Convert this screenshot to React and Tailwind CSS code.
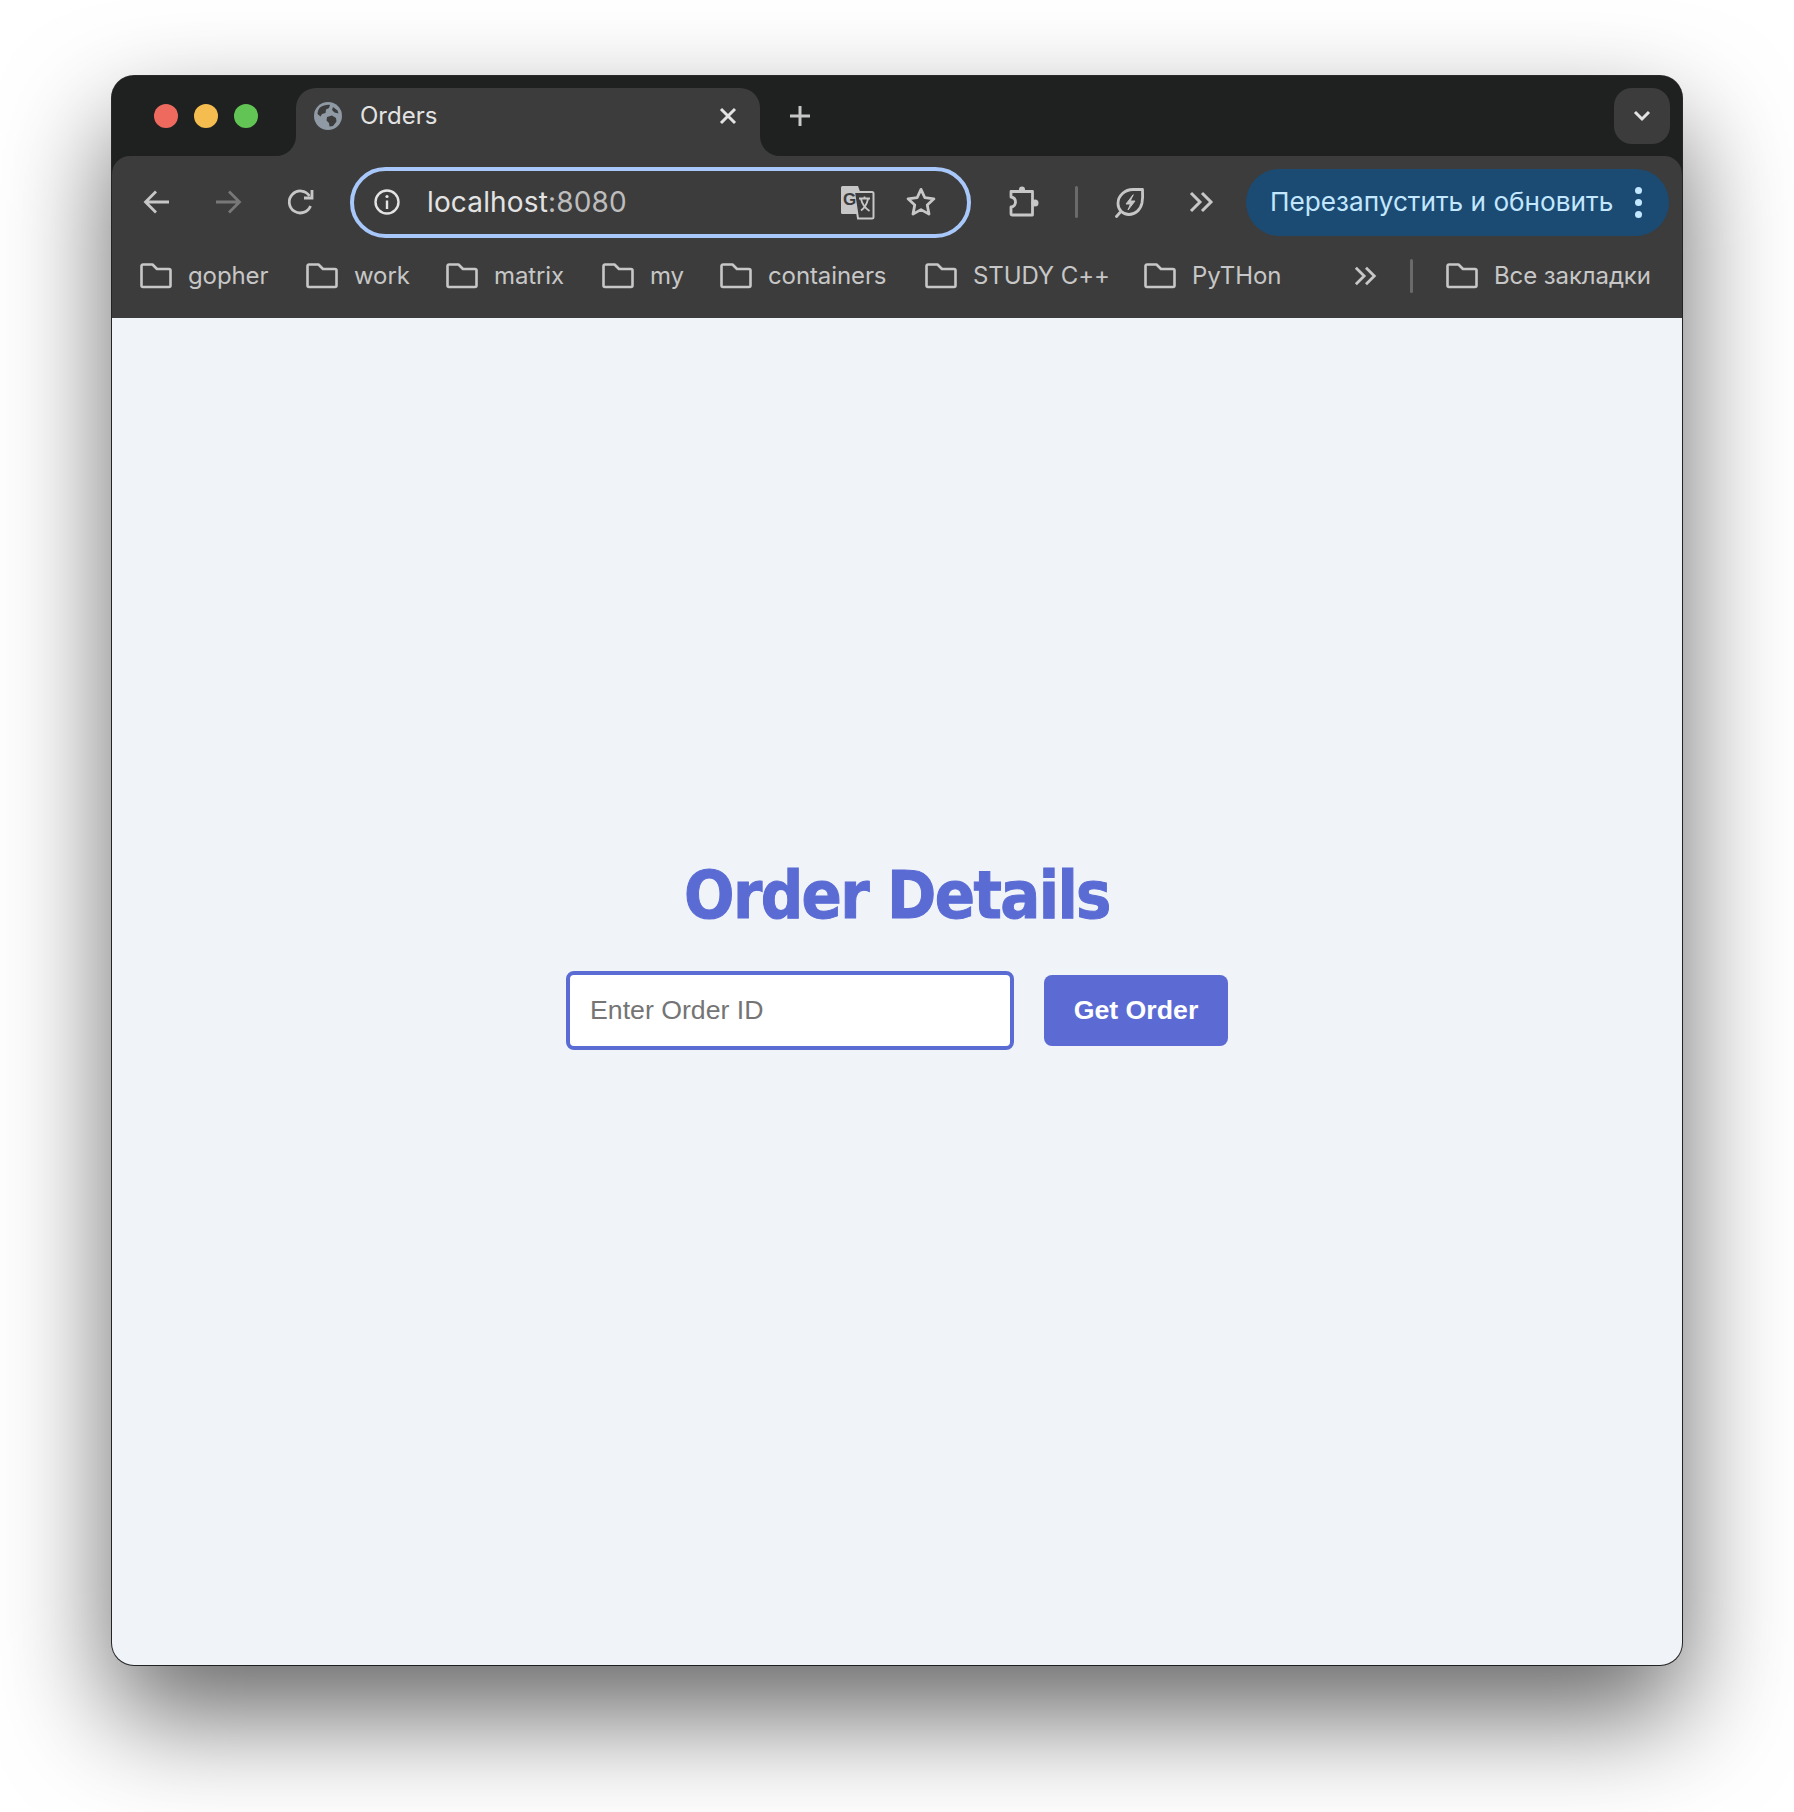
const bookmarks = [
  { label: "gopher", width: "w-[166px]" },
  { label: "work", width: "w-[140px]" },
  { label: "matrix", width: "w-[156px]" },
  { label: "my", width: "w-[118px]" },
  { label: "containers", width: "w-[205px]" },
  { label: "STUDY C++", width: "w-[219px]" },
  { label: "PyTHon", width: "w-[210px]" },
];

function Folder() {
  return (
    <svg width="32" height="26" viewBox="0 0 32 26" fill="none" stroke="#c7c7c7" strokeWidth="2.6" strokeLinejoin="round" className="shrink-0">
      <path d="M1.5 3a1.5 1.5 0 0 1 1.5-1.5h9.5l4.5 4.5h12a1.5 1.5 0 0 1 1.5 1.5v15a1.5 1.5 0 0 1-1.5 1.5H3a1.5 1.5 0 0 1-1.5-1.5z" />
    </svg>
  );
}

function Chevrons({ size = 26 }) {
  return (
    <svg width={size} height={size} viewBox="0 0 26 26" fill="none" stroke="#c7c7c7" strokeWidth="3" className="shrink-0">
      <path d="M2 4l9 9-9 9M13 4l9 9-9 9" />
    </svg>
  );
}

function Globe() {
  return (
    <svg width="28" height="28" viewBox="0 0 28 28" className="shrink-0">
      <circle cx="14" cy="14" r="14" fill="#8f9aa5" />
      <path d="M6 5.5c3-2 7-3 10-2.5l-1 3-3 1.500-.5 3.500-3.500 1-1.500 2.500L3.500 12C3.500 9.500 4.500 7 6 5.500z" fill="#3c3c3c" />
      <path d="M13 15l5-1.500 4 2.500.5 3.500-3.500 4.500-3.500.5-.5-3.500-2.500-2.500z" fill="#3c3c3c" />
      <path d="M19 5l4.500 3.500 1 3-4-1-2.500-2.500z" fill="#3c3c3c" />
    </svg>
  );
}

function Translate() {
  return (
    <svg width="36" height="36" viewBox="0 0 36 36" className="shrink-0">
      <path d="M2 3.500A1.500 1.500 0 0 1 3.500 2H19l10 28H3.500A1.500 1.500 0 0 1 2 28.500z" fill="#c7c7c7" />
      <path d="M15 8h18a1.500 1.500 0 0 1 1.500 1.500V33a1.500 1.500 0 0 1-1.500 1.500H19z" fill="#3c3c3c" stroke="#c7c7c7" strokeWidth="2" />
      <text x="4" y="21" fontFamily="Liberation Sans, sans-serif" fontWeight="700" fontSize="17" fill="#3c3c3c">G</text>
      <path d="M20 14.500h11M25.500 12.500v2M22 15c1 4.500 4 9 8.500 12M29 15c-1 4.500-3.500 9-7 11.500" fill="none" stroke="#c7c7c7" strokeWidth="1.800" />
    </svg>
  );
}

function Puzzle() {
  return (
    <svg width="34" height="34" viewBox="0 0 34 34" fill="none" stroke="#c7c7c7" strokeWidth="2.800" strokeLinejoin="round" className="shrink-0">
      <path d="M4 6.500h21.500v23.500H5.500A1.500 1.500 0 0 1 4 28.500v-6.500c3-.5 4.500-2.500 4.500-5S7 12.500 4 12z" />
      <circle cx="15" cy="4.500" r="3" fill="#c7c7c7" stroke="none" />
      <circle cx="28" cy="18" r="3.500" fill="#c7c7c7" stroke="none" />
    </svg>
  );
}

function Leaf() {
  return (
    <svg width="32" height="32" viewBox="0 0 32 32" fill="none" stroke="#c7c7c7" strokeWidth="2.800" strokeLinejoin="round" strokeLinecap="round" className="shrink-0">
      <path d="M28.500 3.500s.5 8-.5 13.500C26.500 24 21 28.500 15 28.500 8.500 28.500 4 23.500 4 17.500 4 9.500 11 3.500 19 3.500z" />
      <path d="M2.500 30.500l3.500-4" />
      <path d="M19 9l-7 9h4.500l-2.500 6 7-9h-4.500z" fill="#c7c7c7" strokeWidth="1" />
    </svg>
  );
}

export default function App() {
  return (
    <div className="w-[1794px] h-[1812px] bg-white pt-[76px] pl-[112px] overflow-hidden font-['Inter',sans-serif]">
      <div className="w-[1570px] h-[1589px] rounded-[22px] overflow-hidden flex flex-col bg-[#1f2120] shadow-[0_0_0_1px_rgba(20,20,20,0.9),0_50px_110px_0_rgba(0,0,0,0.6)]">
        {/* Tab strip */}
        <div className="h-[80px] shrink-0 bg-[#1f2120] flex items-end relative">
          <div className="flex items-center gap-[16px] pl-[42px] w-[184px] h-[68px] pb-[12px]">
            <span className="w-[24px] h-[24px] rounded-full bg-[#ee6a5f] shrink-0" />
            <span className="w-[24px] h-[24px] rounded-full bg-[#f5bd4f] shrink-0" />
            <span className="w-[24px] h-[24px] rounded-full bg-[#61c454] shrink-0" />
          </div>
          <div className="relative w-[464px] h-[68px] bg-[#3c3c3c] rounded-t-[20px] flex items-center pl-[18px] pr-[22px] pb-[12px]">
            <span className="absolute -left-[20px] bottom-0 w-[20px] h-[20px] bg-[#3c3c3c]">
              <span className="block w-full h-full bg-[#1f2120] rounded-br-[20px]" />
            </span>
            <span className="absolute -right-[20px] bottom-0 w-[20px] h-[20px] bg-[#3c3c3c]">
              <span className="block w-full h-full bg-[#1f2120] rounded-bl-[20px]" />
            </span>
            <Globe />
            <span className="ml-[18px] text-[24px] text-[#e3e3e3]">Orders</span>
            <svg width="20" height="20" viewBox="0 0 20 20" stroke="#e3e3e3" strokeWidth="3" className="ml-auto">
              <path d="M3 3l14 14M17 3L3 17" />
            </svg>
          </div>
          <svg width="24" height="24" viewBox="0 0 24 24" stroke="#c7c7c7" strokeWidth="3" className="ml-[28px] mb-[28px]">
            <path d="M12 2v20M2 12h20" />
          </svg>
          <div className="absolute right-[12px] top-[12px] w-[56px] h-[56px] rounded-[18px] bg-[#3c3c3c] flex items-center justify-center">
            <svg width="18" height="12" viewBox="0 0 18 12" fill="none" stroke="#e3e3e3" strokeWidth="3">
              <path d="M2 2l7 7 7-7" />
            </svg>
          </div>
        </div>

        {/* Toolbar */}
        <div className="h-[162px] shrink-0 bg-[#3c3c3c] rounded-t-[18px] flex flex-col">
          <div className="h-[92px] flex items-center pl-[31px] pr-[14px]">
            <svg width="28" height="28" viewBox="0 0 28 28" fill="none" stroke="#c7c7c7" strokeWidth="2.800" className="shrink-0">
              <path d="M26 14H3M13 3.500L2.500 14 13 24.500" />
            </svg>
            <svg width="28" height="28" viewBox="0 0 28 28" fill="none" stroke="#787878" strokeWidth="2.800" className="ml-[43px] shrink-0">
              <path d="M2 14h23M15 3.500L25.500 14 15 24.500" />
            </svg>
            <svg width="28" height="28" viewBox="0 0 28 28" fill="none" stroke="#c7c7c7" strokeWidth="2.800" className="ml-[45px] shrink-0">
              <path d="M23.500 18a11 11 0 1 1-1-10" />
              <path d="M25 2v8h-8" />
            </svg>
            <div className="ml-[35px] w-[621px] h-[71px] rounded-full border-[4px] border-[#a8c7fa] flex items-center pl-[20px] pr-[30px] shrink-0">
              <svg width="28" height="28" viewBox="0 0 28 28" fill="none" stroke="#e3e3e3" strokeWidth="2.400" className="shrink-0 -ml-px">
                <circle cx="14" cy="14" r="11.500" />
                <path d="M14 12.500V21" />
                <circle cx="14" cy="8.500" r="1.600" fill="#e3e3e3" stroke="none" />
              </svg>
              <span className="ml-[26px] text-[28px] text-[#e3e3e3] tracking-[0.15px]">
                localhost<span className="text-[#bdbdbd]">:8080</span>
              </span>
              <span className="ml-auto flex items-center gap-[30px]">
                <Translate />
                <svg width="32" height="32" viewBox="0 0 24 24" fill="none" stroke="#c7c7c7" strokeWidth="2.100" strokeLinejoin="round" className="shrink-0">
                  <path d="M12 2.500l2.900 6.300 6.800.8-5 4.700 1.300 6.800L12 17.700l-6 3.400 1.300-6.800-5-4.700 6.800-.8z" />
                </svg>
              </span>
            </div>
            <span className="ml-[36px]"><Puzzle /></span>
            <span className="ml-[34px] w-[3px] h-[32px] rounded-full bg-[#6a6a6a] shrink-0" />
            <span className="ml-[36px]"><Leaf /></span>
            <span className="ml-[43px]"><Chevrons /></span>
            <div className="ml-[31px] w-[423px] h-[67px] rounded-full bg-[#1b4b73] flex items-center pl-[24px] pr-[27px] shrink-0">
              <span className="text-[26.200px] text-[#c2e7ff] whitespace-nowrap">Перезапустить и обновить</span>
              <span className="ml-auto flex flex-col gap-[5px]">
                <span className="w-[7px] h-[7px] rounded-full bg-[#c2e7ff]" />
                <span className="w-[7px] h-[7px] rounded-full bg-[#c2e7ff]" />
                <span className="w-[7px] h-[7px] rounded-full bg-[#c2e7ff]" />
              </span>
            </div>
          </div>
          <div className="flex-1 flex items-center pl-[28px] pb-[14px] text-[24px] tracking-[-0.1px] text-[#c7c7c7]">
            {bookmarks.map((b) => (
              <div key={b.label} className={`flex items-center gap-[16px] shrink-0 ${b.width}`}>
                <Folder />
                <span className="whitespace-nowrap">{b.label}</span>
              </div>
            ))}
            <Chevrons size={24} />
            <span className="ml-[32px] w-[3px] h-[34px] rounded-full bg-[#6a6a6a] shrink-0" />
            <div className="ml-[33px] flex items-center gap-[16px] shrink-0">
              <Folder />
              <span className="whitespace-nowrap">Все закладки</span>
            </div>
          </div>
        </div>

        {/* Page */}
        <div className="flex-1 flex flex-col items-center pt-[538px] bg-[#f0f4f9]">
          <h1 className="text-[66px] leading-[80px] font-bold tracking-[-1.600px] text-[#5a6bd4] [-webkit-text-stroke:1px_#5a6bd4] font-['DejaVu_Sans_Condensed','DejaVu_Sans',sans-serif]">
            Order Details
          </h1>
          <div className="mt-[35px] flex items-center gap-[30px] font-['Liberation_Sans',sans-serif]">
            <input
              type="text"
              placeholder="Enter Order ID"
              className="w-[448px] h-[79px] bg-white border-[4px] border-[#5a6bd4] rounded-[8px] px-[20px] text-[26.700px] outline-none placeholder:text-[#757575]"
            />
            <button className="w-[184px] h-[71px] bg-[#5c6bd3] rounded-[8px] text-[26.700px] font-bold text-white">
              Get Order
            </button>
          </div>
        </div>
      </div>
    </div>
  );
}
